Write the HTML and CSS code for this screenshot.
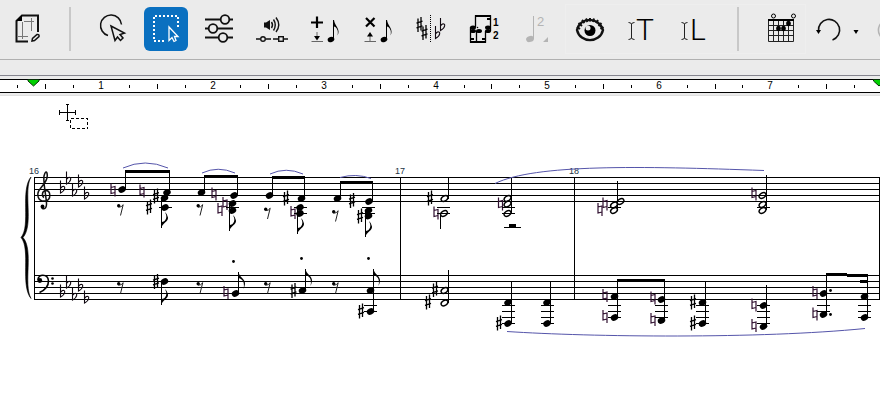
FILE: index.html
```html
<!DOCTYPE html>
<html lang="en">
<head>
  <meta charset="UTF-8">
  <meta name="viewport" content="width=device-width, initial-scale=1.0">
  <title>Score Editor</title>
  <link rel="stylesheet" href="styles.css">
</head>
<body>
  <div class="toolbar">
    <button class="tool" aria-label="Page layout">
      <svg viewBox="0 0 44 44">
        <path d="M32 25V8.500H16L10.500 14V34.500H22" fill="none" stroke="#111" stroke-width="2"/>
        <path d="M10 14L16 8V14Z"/>
        <path d="M16.500 15V32M12 29.500H22M18 14.500H28M25.500 11V24" fill="none" stroke="#777"/>
        <path d="M26 34L26.500 31.500L31 27.500Q33.500 27 33 29.500L28.500 33.500Z" fill="#eee" stroke="#111" stroke-width="1.500"/>
      </svg>
    </button>
    <span class="separator"></span>
    <button class="tool" aria-label="Lasso select">
      <svg viewBox="0 0 44 44" fill="none" stroke="#111" stroke-width="1.500">
        <path d="M30.500 17.500A10.500 10.500 0 1 0 17 28.500"/>
        <path d="M20 19L33.500 26L29 27.500L32 31L29.500 33.500L26.500 30L24 33.500Z"/>
      </svg>
    </button>
    <button class="tool active" aria-label="Select area">
      <svg viewBox="0 0 44 44" fill="none" stroke="#fff">
        <path d="M20 34H10V9H34V20" stroke-width="2" stroke-dasharray="2 2"/>
        <path d="M25 20V33.500L28 30.500L30 34.500L32 33.500L30.500 29.500H34Z" stroke-width="1.300"/>
      </svg>
    </button>
    <button class="tool" aria-label="Settings">
      <svg viewBox="0 0 44 44" fill="none" stroke="#111" stroke-width="1.800">
        <path d="M8 12.500H23.500M32.500 12.500H36M8 21.500H11.500M20.500 21.500H36M8 30.500H21.500M30.500 30.500H36"/>
        <circle cx="28" cy="12.500" r="4.300"/><circle cx="16" cy="21.500" r="4.300"/><circle cx="26" cy="30.500" r="4.300"/>
      </svg>
    </button>
    <button class="tool" aria-label="Playback">
      <svg viewBox="0 0 44 44" fill="none" stroke="#111" stroke-width="1.400">
        <path d="M14 15.500H16L20 13V23L16 20.500H14Z" fill="#111" stroke="none"/>
        <path d="M21.500 15Q23.500 18 21.500 21M23.500 12.500Q27 18 23.500 23.500M26 10.500Q31.500 18 26 25"/>
        <path d="M6 32H10M16 32H21M23 32H28M34 32H38"/>
        <circle cx="13" cy="32" r="2.300"/><rect x="28.700" y="29.700" width="4.600" height="4.600"/>
      </svg>
    </button>
    <button class="tool" aria-label="Insert note">
      <svg viewBox="0 0 44 44">
        <path d="M8 15.500H20M14 9.500V21" stroke="#000" stroke-width="2.200"/>
        <path d="M14 25V30M8.500 34.500H20" stroke="#666"/>
        <path d="M11 29H17L14 33.500Z"/>
        <ellipse cx="28" cy="32.500" rx="3.400" ry="2.600" transform="rotate(-20 28 32.500)"/>
        <path d="M30 13H31C31.500 19 38 22 34.500 28.500C36 23 33 20 31 19.500V32.500H30Z"/>
      </svg>
    </button>
    <button class="tool" aria-label="Delete note">
      <svg viewBox="0 0 44 44">
        <path d="M10 11L18.500 19.500M18.500 11L10 19.500" stroke="#000" stroke-width="2.200"/>
        <path d="M14 29V34M8.500 34.500H20" stroke="#666"/>
        <path d="M11 29.500H17L14 25Z"/>
        <ellipse cx="28" cy="32.500" rx="3.400" ry="2.600" transform="rotate(-20 28 32.500)"/>
        <path d="M30 13H31C31.500 19 38 22 34.500 28.500C36 23 33 20 31 19.500V32.500H30Z"/>
      </svg>
    </button>
    <button class="tool" aria-label="Enharmonic change">
      <svg viewBox="0 0 44 44">
        <use href="#sharp" x="10.500" y="17.500"/>
        <use href="#sharp" x="15.500" y="25.500"/>
        <path d="M21.500 8V36" stroke="#000" stroke-dasharray="1 1"/>
        <use href="#flat" x="26.500" y="28"/>
        <use href="#flat" x="31.500" y="20"/>
      </svg>
    </button>
    <button class="tool" aria-label="Split voices">
      <svg viewBox="0 0 44 44">
        <path d="M13.500 20V9H28.500V24M8.500 20V35H23.500V24M14.500 24V35" fill="none" stroke="#000" stroke-width="1.300"/>
        <path d="M13 8H29V10H13ZM8 34H24V36H8ZM9 31H12V33H9ZM20 31H23V33H20ZM25 11H28V13H25Z"/>
        <ellipse cx="11" cy="20.500" rx="3" ry="2"/><ellipse cx="11" cy="24" rx="3" ry="2"/>
        <ellipse cx="17" cy="24" rx="3" ry="2"/><ellipse cx="26" cy="20.500" rx="3" ry="2"/>
        <ellipse cx="26" cy="24" rx="3" ry="2"/><circle cx="15.500" cy="20.500" r="0.800"/>
        <text class="voice" x="31" y="19">1</text>
        <text class="voice" x="31" y="32">2</text>
      </svg>
    </button>
    <button class="tool" aria-label="Note value" disabled>
      <svg viewBox="0 0 44 44" fill="#b4b4b4">
        <ellipse cx="15" cy="32" rx="4" ry="3" transform="rotate(-20 15 32)"/>
        <path d="M18 9H19V32H18ZM33 30V35H28Z"/>
        <text class="value" x="22" y="19">2</text>
      </svg>
    </button>
    <div class="tool-group">
      <button class="tool" aria-label="Show">
        <svg viewBox="0 0 44 44">
          <path d="M9 23C12 9.500 31 9.500 35 23C32 36.500 12 36.500 9 23Z" fill="none" stroke="#111" stroke-width="2.400"/>
          <path d="M9 20L12 22M10.500 16L14 19M14 13L16.500 16M18 11.500L19.500 15M22 11V14.500M26 11.500L25 15M30 13L28 16M33.500 16L30.500 19M35.500 20L32.500 22" stroke="#111" stroke-width="2"/>
          <circle cx="22" cy="23.500" r="5.500"/>
          <circle cx="20" cy="21" r="2.500" fill="#ebebeb"/>
        </svg>
      </button>
      <button class="tool" aria-label="Insert title text">
        <svg viewBox="0 0 44 44">
          <path d="M7.500 15.500Q10.500 15.500 10.500 17.500Q10.500 15.500 13.500 15.500M10.500 17V31M7.500 32.500Q10.500 32.500 10.500 30.500Q10.500 32.500 13.500 32.500" fill="none" stroke="#222"/>
          <text class="letter" x="15" y="33">T</text>
        </svg>
      </button>
      <button class="tool" aria-label="Insert lyrics">
        <svg viewBox="0 0 44 44">
          <path d="M7.500 15.500Q10.500 15.500 10.500 17.500Q10.500 15.500 13.500 15.500M10.500 17V31M7.500 32.500Q10.500 32.500 10.500 30.500Q10.500 32.500 13.500 32.500" fill="none" stroke="#222"/>
          <text class="letter" x="16" y="33">L</text>
        </svg>
      </button>
      <span class="separator"></span>
      <button class="tool" aria-label="Chord diagram">
        <svg viewBox="0 0 44 44">
          <path d="M9.500 12V34.500H34.500V12M14.500 13V34M19.500 13V34M24.500 13V34M29.500 13V34M9 18.500H35M9 23.500H35M9 28.500H35" fill="none" stroke="#222"/>
          <path d="M9 12H35V14H9Z"/>
          <ellipse cx="19.500" cy="21.500" rx="2.300" ry="2.700"/><ellipse cx="24.500" cy="21.500" rx="2.300" ry="2.700"/>
          <ellipse cx="29.500" cy="16.500" rx="2.300" ry="2.700"/>
          <circle cx="14.500" cy="9" r="2" fill="none" stroke="#000"/><circle cx="34.500" cy="9" r="2" fill="none" stroke="#000"/>
        </svg>
      </button>
    </div>
    <div class="history">
      <button class="tool narrow" aria-label="Undo">
        <svg viewBox="0 0 32 44">
          <path d="M6.500 24A10.600 10.600 0 1 1 20.500 33" fill="none" stroke="#111" stroke-width="1.600"/>
          <path d="M4 23H9L6.500 27Z"/>
        </svg>
      </button>
      <button class="tool drop" aria-label="Undo history">
        <svg viewBox="0 0 24 44"><path d="M9.500 23H14.500L12 27Z"/></svg>
      </button>
    </div>
    <button class="tool narrow" aria-label="Redo" disabled>
      <svg viewBox="0 0 32 44"><path d="M22 24A10.300 10.300 0 1 0 9 33" fill="none" stroke="#b4b4b4" stroke-width="1.600"/></svg>
    </button>
  </div>

  <div class="ruler">
    <svg viewBox="0 0 880 12">
      <path class="line" d="M17.500 5v3M73.500 5v3M129.500 5v3M185.500 5v3M240.500 5v3M296.500 5v3M352.500 5v3M408.500 5v3M464.500 5v3M519.500 5v3M575.500 5v3M631.500 5v3M687.500 5v3M742.500 5v3M798.500 5v3M854.500 5v3"/>
      <path class="line" d="M45.500 4v5M157.500 4v5M268.500 4v5M380.500 4v5M491.500 4v5M603.500 4v5M715.500 4v5M826.500 4v5"/>
      <g class="inches">
        <text x="101" y="9">1</text><text x="213" y="9">2</text><text x="324" y="9">3</text><text x="436" y="9">4</text>
        <text x="547" y="9">5</text><text x="659" y="9">6</text><text x="770" y="9">7</text>
      </g>
      <path class="marker" d="M28 -0.500H39V1L33.500 6L28 1Z"/>
      <path class="marker" d="M873.500 -0.500H884.500V1L879 6L873.500 1Z"/>
    </svg>
  </div>

  <main class="score">
    <svg viewBox="0 96 880 314">
      <defs>
        <ellipse id="head" rx="3.900" ry="3" transform="rotate(-28)"/>
        <g id="half">
          <ellipse rx="3.700" ry="2.400" transform="rotate(-32)" fill="none" stroke="#000" stroke-width="1.400"/>
        </g>
        <path id="sharp" d="M-1.500 -6V7.500M1.500 -7.500V6M-3 -1.300L3 -3.300M-3 3.300L3 1.300" fill="none" stroke="#000" stroke-width="1.300"/>
        <path id="flat" d="M0 -9V3.500C5.500 0.500 5 -4 2 -3Q1 -2.500 0 -1" fill="none" stroke="#100810" stroke-width="1.100"/>
        <path id="natural" d="M-2 -6.500V3.500L2 2.500M2 6.500V-3.500L-2 -2.500" fill="none" stroke="#301030" stroke-width="1.200"/>
        <g id="rest">
          <circle cx="-1.800" cy="-3.700" r="1.700"/>
          <path d="M-2 -2.400Q1 -2 2.700 -4.800L0 6" fill="none" stroke="#222"/>
        </g>
        <path id="flag-up" d="M0 0C0.500 5 7 7 6.500 12Q6 15 5 17Q6.500 10 3 7.500Q1.500 6 0 6Z"/>
        <path id="flag-down" d="M0 0C0.500 -5 7 -6 6.500 -10.500Q6 -14 3.500 -16Q6.500 -10 3 -7Q1.500 -6 0 -6Z"/>
        <path id="ledger" class="line" d="M-6.500 0.500H6.500"/>
      </defs>

      <!-- staves and bar lines -->
      <path class="line" d="M34 177.500H880M34 183.500H880M34 189.500H880M34 195.500H880M34 201.500H880"/>
      <path class="line" d="M34 275.500H880M34 281.500H880M34 287.500H880M34 293.500H880M34 299.500H880"/>
      <path class="line" d="M34.500 177V300M400.500 177V300M574.500 177V300M879.500 177V300"/>
      <path d="M31 177C20 190 31 226 21 237.500C31 249 20 285 31 298.500C23 284 34 250 23 237.500C34 225 23 191 31 177Z" stroke="#000" stroke-width="0.600"/>
      <g class="bar-number">
        <text x="29" y="174">16</text><text x="395" y="174">17</text><text x="569" y="174">18</text>
      </g>

      <!-- clefs and key signatures -->
      <path d="M44 197.500C41.500 196 42 191 45.500 190.500C51 190.500 51.500 199.500 45.500 201C37.500 202 36 194 40 189C43 185 47.500 181 47.300 175.500C47 170 45 171.500 44 176C43 181 45.500 192 46.500 203C47 209.500 42 210 41.500 207" fill="none" stroke="#111" stroke-width="1.500"/>
      <circle cx="42.500" cy="206.500" r="1.900"/>
      <path d="M38 280C37.500 274 48 273 48.500 281C48.500 287 44 290.500 39.500 292.500" fill="none" stroke="#000" stroke-width="1.600"/>
      <circle cx="39.800" cy="280.500" r="2.400"/><circle cx="52.500" cy="278.500" r="1.300"/><circle cx="52.500" cy="283.500" r="1.300"/>
      <use href="#flat" x="60.500" y="189.500"/><use href="#flat" x="66.500" y="180.500"/><use href="#flat" x="72.500" y="192.500"/><use href="#flat" x="78.500" y="183.500"/><use href="#flat" x="84.500" y="195.500"/>
      <use href="#flat" x="60.500" y="293.500"/><use href="#flat" x="66.500" y="284.500"/><use href="#flat" x="72.500" y="296.500"/><use href="#flat" x="78.500" y="287.500"/><use href="#flat" x="84.500" y="299.500"/>

      <!-- bar 16, treble -->
      <use href="#natural" x="113" y="190"/><use href="#head" x="122" y="189.500"/>
      <use href="#natural" x="142" y="191"/><use href="#sharp" x="156" y="196"/><use href="#head" x="167" y="192.500"/><use href="#head" x="164.500" y="198"/>
      <use href="#sharp" x="149" y="207"/><use href="#head" x="165" y="207.500"/><use href="#ledger" x="165" y="207"/>
      <use href="#rest" x="120.500" y="209.500"/><use href="#flag-down" x="161.500" y="228"/>
      <use href="#head" x="201.500" y="192.500"/><use href="#natural" x="214" y="194"/><use href="#head" x="234" y="195.500"/>
      <use href="#natural" x="225" y="203.500"/><use href="#natural" x="220" y="209.500"/><use href="#head" x="232.500" y="203.500"/><use href="#head" x="232.500" y="210.500"/><use href="#ledger" x="232.500" y="207"/>
      <use href="#rest" x="200" y="209.500"/><use href="#flag-down" x="229.500" y="231"/>
      <use href="#head" x="269.500" y="195.500"/><use href="#sharp" x="286" y="198"/><use href="#head" x="301.500" y="198.500"/>
      <use href="#natural" x="293" y="212.500"/><use href="#head" x="300" y="207.500"/><use href="#head" x="300" y="213.500"/><use href="#ledger" x="300.500" y="207"/><use href="#ledger" x="300.500" y="213"/>
      <use href="#rest" x="267.500" y="213"/><use href="#flag-down" x="297.500" y="234"/>
      <use href="#head" x="337.500" y="198.500"/><use href="#sharp" x="352" y="200.500"/><use href="#head" x="369" y="201.500"/>
      <use href="#sharp" x="360" y="216"/><use href="#head" x="368.500" y="210.500"/><use href="#head" x="368.500" y="216"/><use href="#ledger" x="368" y="207"/><use href="#ledger" x="368" y="213"/>
      <use href="#rest" x="335.500" y="215.500"/><use href="#flag-down" x="365.500" y="237"/>
      <path class="line" d="M125.500 171V189M169.500 171V192M161.500 198V228M204.500 175V192M237.500 175V195M229.500 203V231M272.500 176V195M304.500 176V198M297.500 207V234M340.500 181V198M372.500 181V201M365.500 210V237"/>
      <path class="beam" d="M125 170H170V173H125ZM204 175H238V178H204ZM272 176H305V179H272ZM340 181H373V184H340Z"/>
      <path class="slur" d="M123 168Q145 158 168 168M202 173Q218 165.500 235 173M270 174Q286 166.500 303 174M340 177.500Q356 173 371 178.500"/>

      <!-- bar 16, bass -->
      <use href="#rest" x="120.500" y="287.500"/><use href="#sharp" x="156" y="281.500"/><use href="#head" x="164.500" y="281.500"/><use href="#flag-down" x="161.500" y="305"/>
      <use href="#rest" x="200" y="287.500"/><use href="#natural" x="226" y="292.500"/><use href="#head" x="235.500" y="293.500"/><use href="#flag-up" x="238.500" y="272"/>
      <use href="#rest" x="267.500" y="287.500"/><use href="#sharp" x="293.500" y="290.500"/><use href="#head" x="302.500" y="290.500"/><use href="#flag-up" x="305.500" y="269"/>
      <use href="#rest" x="335.500" y="287.500"/><use href="#head" x="370.500" y="290.500"/><use href="#sharp" x="361" y="311"/><use href="#head" x="370.500" y="311.500"/><use href="#flag-up" x="373.500" y="269"/>
      <use href="#ledger" x="370.500" y="305"/><use href="#ledger" x="370.500" y="311"/>
      <path class="line" d="M161.500 281V305M238.500 272V293M305.500 269V290M373.500 269V311"/>
      <circle cx="233.500" cy="261.500" r="1.400"/><circle cx="301.500" cy="258.500" r="1.400"/><circle cx="368.500" cy="258.500" r="1.400"/>

      <!-- bar 17 -->
      <use href="#sharp" x="430" y="198"/><use href="#half" x="444.500" y="198.500"/><use href="#natural" x="436" y="213"/><use href="#half" x="444" y="213.500"/>
      <use href="#ledger" x="443.500" y="207"/><use href="#ledger" x="443.500" y="213"/>
      <use href="#natural" x="500.500" y="204"/><use href="#half" x="507.500" y="198.500"/><use href="#half" x="507.500" y="204"/><use href="#half" x="507.500" y="213.500"/>
      <use href="#ledger" x="508.500" y="207"/><use href="#ledger" x="508.500" y="213"/>
      <path d="M509 224H516V227H509ZM504 227H521V228H504Z"/>
      <use href="#sharp" x="435" y="289.500"/><use href="#half" x="444.500" y="290.500"/><use href="#sharp" x="428" y="302"/><use href="#half" x="444.500" y="303"/>
      <use href="#head" x="508" y="302.500"/><use href="#sharp" x="499" y="323"/><use href="#head" x="508" y="323.500"/>
      <use href="#head" x="547" y="302.500"/><use href="#head" x="547" y="323.500"/>
      <use href="#ledger" x="508.500" y="305"/><use href="#ledger" x="508.500" y="311"/><use href="#ledger" x="508.500" y="317"/><use href="#ledger" x="508.500" y="323"/>
      <use href="#ledger" x="547.500" y="305"/><use href="#ledger" x="547.500" y="311"/><use href="#ledger" x="547.500" y="317"/><use href="#ledger" x="547.500" y="323"/>
      <path class="line" d="M448.500 177V199M440.500 213V229M511.500 177V213M448.500 270V303M511.500 281V323M550.500 281V323"/>

      <!-- bar 18, treble -->
      <use href="#natural" x="605" y="204"/><use href="#natural" x="600" y="209.500"/><use href="#half" x="620.500" y="201.500"/><use href="#half" x="614" y="205"/><use href="#half" x="614" y="210.500"/><use href="#ledger" x="614.500" y="207"/>
      <use href="#natural" x="754" y="194"/><use href="#half" x="762.500" y="195.500"/><use href="#half" x="762.500" y="204.500"/><use href="#half" x="762.500" y="210.500"/><use href="#ledger" x="763.500" y="207"/>
      <path class="line" d="M617.500 181V210M766.500 175V210"/>

      <!-- bar 18, bass -->
      <use href="#natural" x="605" y="295.500"/><use href="#natural" x="605" y="316.500"/><use href="#head" x="614.500" y="296.500"/><use href="#head" x="614.500" y="317.500"/>
      <use href="#ledger" x="614.500" y="305"/><use href="#ledger" x="614.500" y="311"/><use href="#ledger" x="614.500" y="317"/>
      <use href="#natural" x="653" y="298"/><use href="#natural" x="653" y="319.500"/><use href="#head" x="661.500" y="299.500"/><use href="#head" x="661.500" y="320.500"/>
      <use href="#ledger" x="661.500" y="305"/><use href="#ledger" x="661.500" y="311"/><use href="#ledger" x="661.500" y="317"/>
      <use href="#sharp" x="693" y="302"/><use href="#sharp" x="693" y="323"/><use href="#head" x="702.500" y="302.500"/><use href="#head" x="702.500" y="323.500"/>
      <use href="#ledger" x="702.500" y="305"/><use href="#ledger" x="702.500" y="311"/><use href="#ledger" x="702.500" y="317"/><use href="#ledger" x="702.500" y="323"/>
      <use href="#natural" x="754" y="305"/><use href="#natural" x="754" y="325.500"/><use href="#head" x="763.500" y="305.500"/><use href="#head" x="763.500" y="326.500"/>
      <use href="#ledger" x="763.500" y="305"/><use href="#ledger" x="763.500" y="311"/><use href="#ledger" x="763.500" y="317"/><use href="#ledger" x="763.500" y="323"/>
      <use href="#natural" x="815" y="292.500"/><use href="#natural" x="815" y="314"/><use href="#head" x="823.500" y="293.500"/><use href="#head" x="823.500" y="314.500"/>
      <use href="#ledger" x="823.500" y="305"/><use href="#ledger" x="823.500" y="311"/>
      <circle cx="830.500" cy="290.500" r="1.400"/><circle cx="830.500" cy="314.500" r="1.400"/>
      <use href="#head" x="864.500" y="296.500"/><use href="#head" x="864.500" y="317.500"/>
      <use href="#ledger" x="864.500" y="305"/><use href="#ledger" x="864.500" y="311"/><use href="#ledger" x="864.500" y="317"/>
      <path class="line" d="M617.500 279V317M664.500 279V320M705.500 281V323M766.500 285V326M826.500 273V314M867.500 275V317"/>
      <path class="beam" d="M617 279H665V282H617ZM826 273L868 274V277L826 276ZM860 280H868V283H860Z"/>

      <!-- phrase marks -->
      <path class="slur" d="M495 183.500C535 164 640 166 764 170.500M507 331.500C590 337 760 339 865 328.500"/>

      <!-- insertion cursor -->
      <path class="line" d="M59 112.500H76M67.500 104V121M59.500 110V115M75.500 110V115M66 104.500H69M66 120.500H69"/>
      <rect class="line" x="70.500" y="118.500" width="17" height="10" stroke-dasharray="3 2"/>
    </svg>
  </main>
</body>
</html>
```

FILE: styles.css
```css
body {
  margin: 0;
  background: #fff;
  font-family: "Liberation Sans", Arial, sans-serif;
  overflow-x: hidden;
}

svg {
  display: block;
  width: 100%;
}

.toolbar {
  display: flex;
  align-items: center;
  gap: 9px;
  padding: 7px 0 8px 6px;
  background: #ebebeb;
  border-bottom: 1px solid #b0b0b0;
  overflow: hidden;
}

.tool-group {
  display: flex;
  flex: none;
  gap: 9px;
  outline: 1px solid #eee;
  outline-offset: 2px;
}

.history {
  display: flex;
  flex: none;
}

.tool {
  flex: none;
  width: 44px;
  height: 44px;
  padding: 0;
  border: none;
  border-radius: 6px;
  background: none;
  cursor: pointer;
}

.tool:hover {
  background: #dcdcdc;
}

.tool.active {
  background: #0a70c0;
}

.tool.narrow {
  width: 32px;
}

.tool.drop {
  width: 24px;
}

.tool:disabled {
  background: none;
  cursor: default;
}

.separator {
  flex: none;
  width: 2px;
  height: 44px;
  margin: 0 11px 0 10px;
  background: #c8c8c8;
}

.voice {
  font-size: 10px;
  font-weight: bold;
}

.value {
  font-size: 13px;
}

.letter {
  font-family: Roboto, "Liberation Sans", sans-serif;
  font-size: 30px;
  font-weight: 300;
}

.ruler {
  padding-top: 15px;
  background: #ebebeb;
  border-bottom: 1px solid #e0e0e0;
}

.ruler svg {
  overflow: visible;
  background: #fff;
  border-top: 1px solid #000;
  border-bottom: 1px solid #000;
  box-shadow: 0 -3px #ebebeb, 0 -4px #85858f;
  margin: 4px 0 2px;
}

.inches {
  font-size: 10px;
  text-anchor: middle;
}

.marker {
  fill: #00d000;
  stroke: #063006;
}

.line {
  fill: none;
  stroke: #000;
  shape-rendering: crispEdges;
}

.beam {
  shape-rendering: crispEdges;
}

.slur {
  fill: none;
  stroke: #5555aa;
}

.bar-number {
  fill: #223344;
  font-size: 9px;
}
```
